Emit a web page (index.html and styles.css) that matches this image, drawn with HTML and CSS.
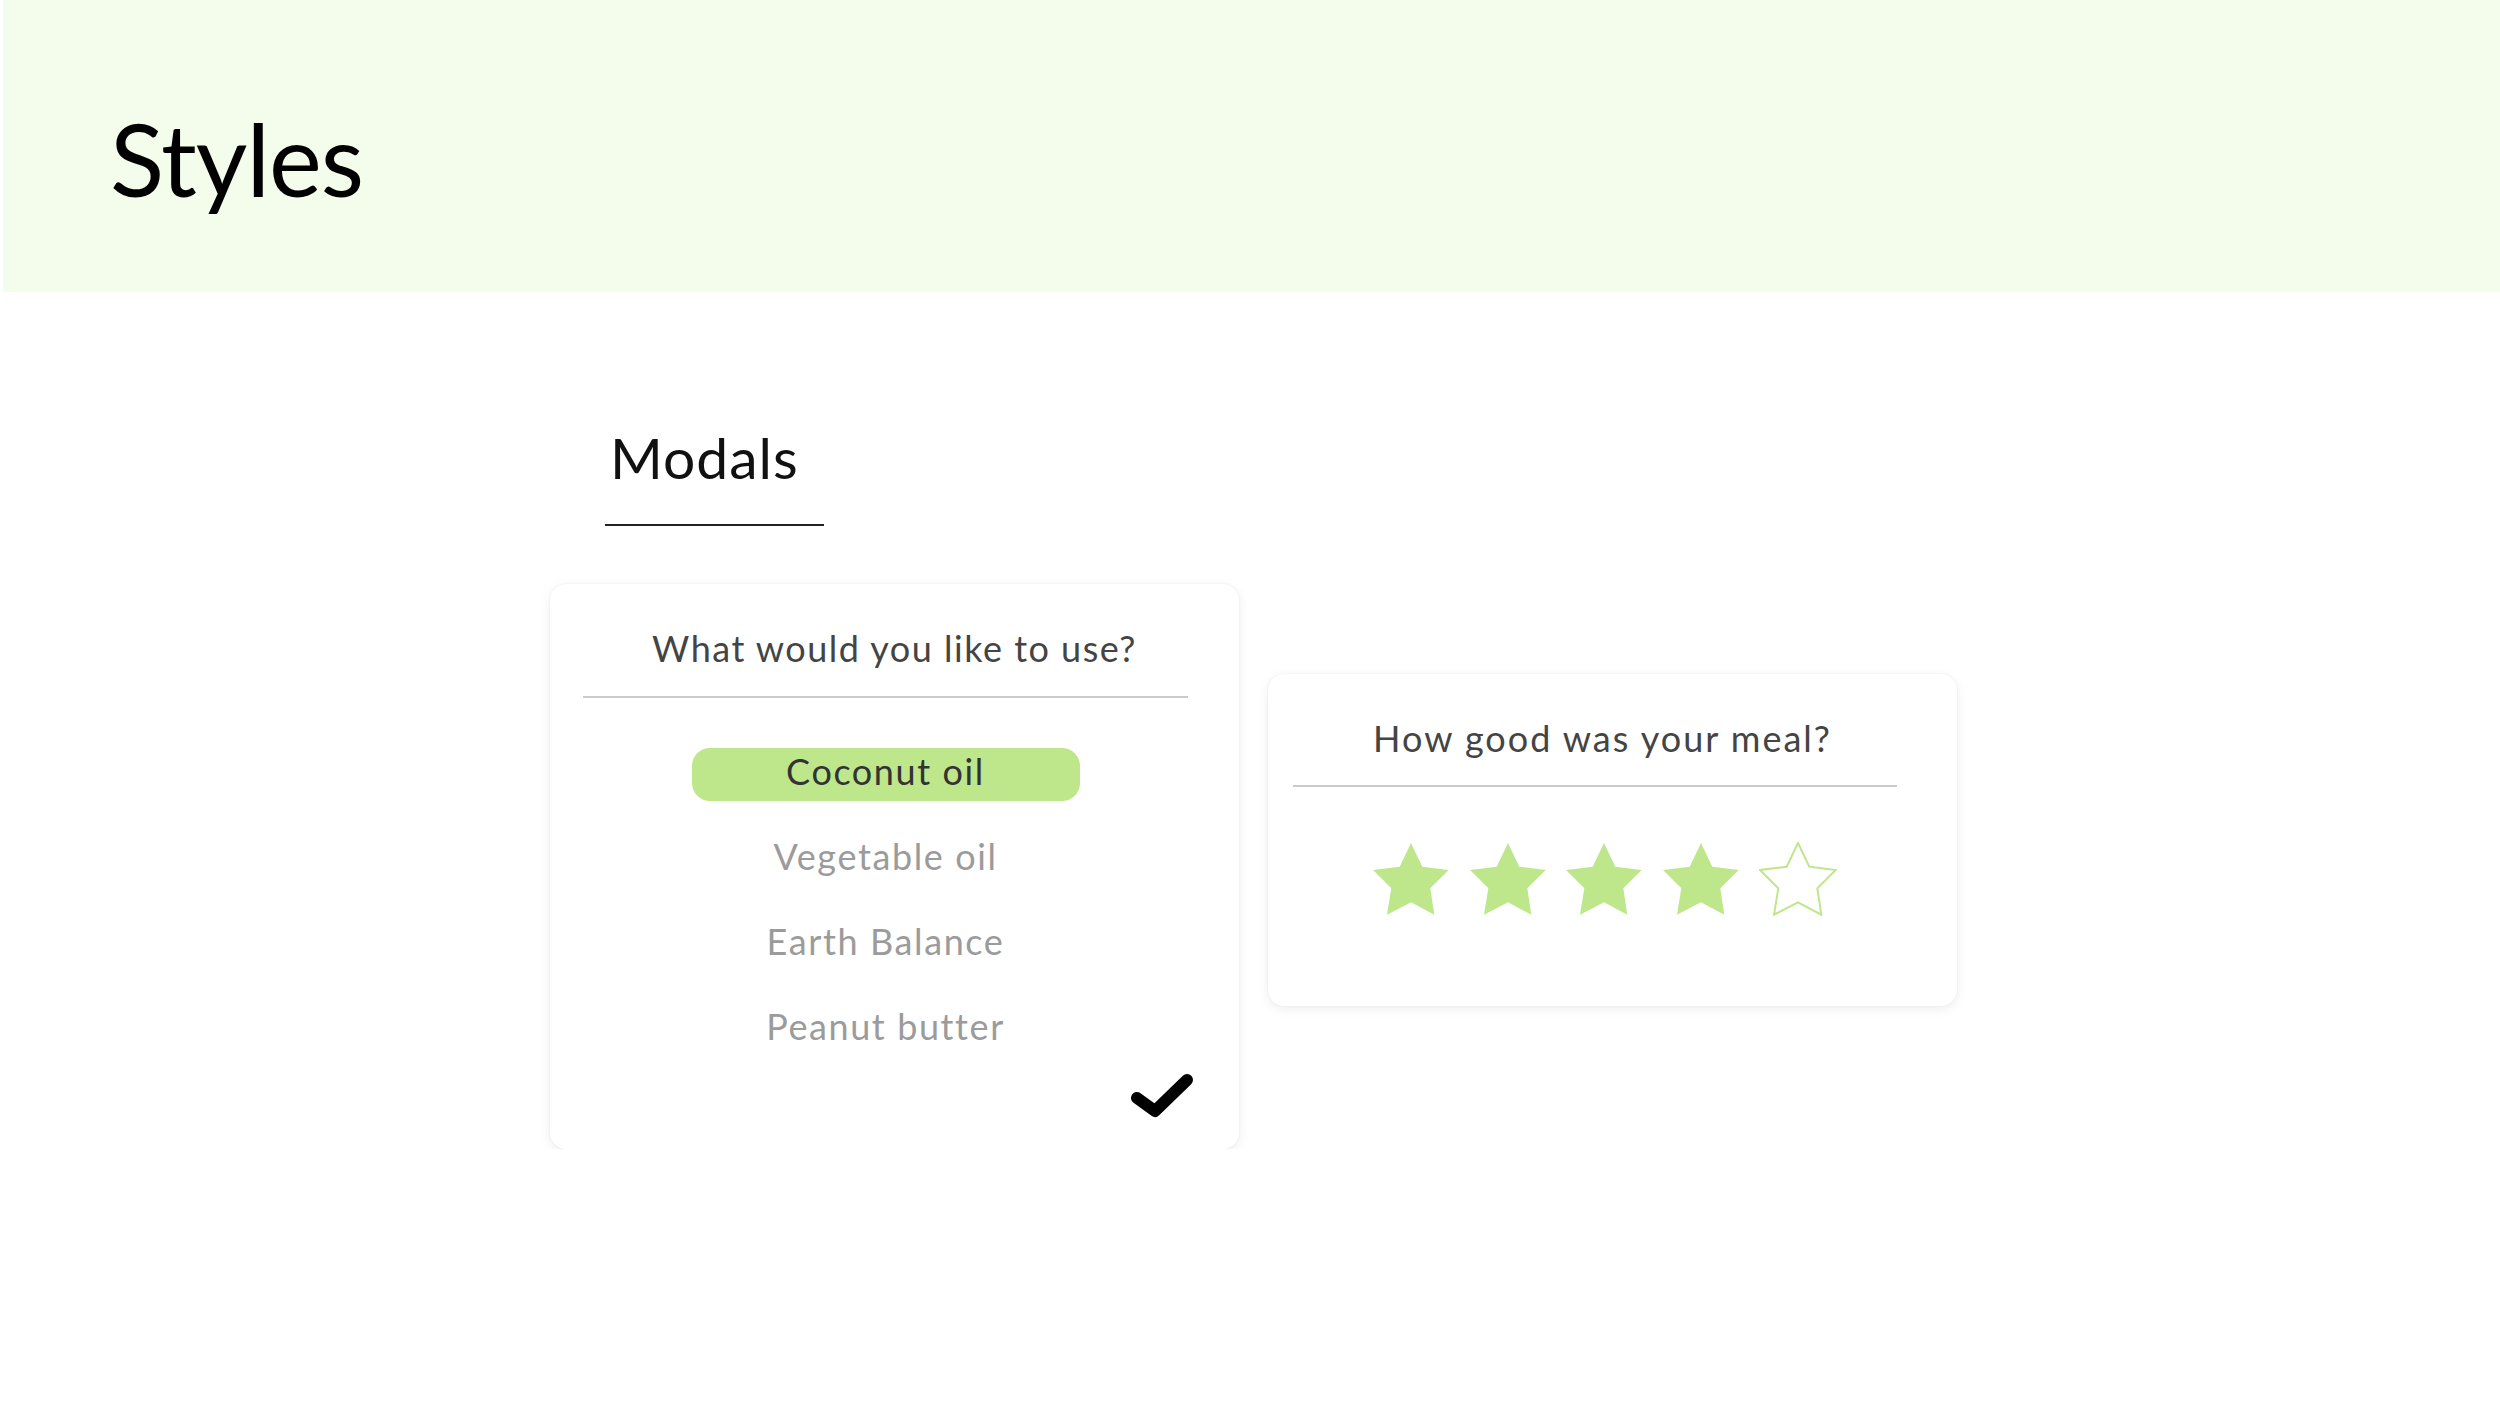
FILE: index.html
```html
<!DOCTYPE html>
<html lang="en">
<head>
<meta charset="utf-8">
<title>Styles</title>
<link rel="stylesheet" href="styles.css">
</head>
<body>
<header class="hero">
  <h1 class="hero-title">Styles</h1>
</header>
<main class="content">
  <section class="section">
    <h2 class="section-title">Modals</h2>
    <div class="modals">
      <div class="modal modal-choice">
        <div class="modal-title">What would you like to use?</div>
        <div class="modal-body">
          <div class="modal-rule"></div>
          <ul class="options">
            <li class="option selected">Coconut oil</li>
            <li class="option">Vegetable oil</li>
            <li class="option">Earth Balance</li>
            <li class="option">Peanut butter</li>
          </ul>
        </div>
        <div class="modal-actions">
          <svg class="check" width="64" height="48" viewBox="0 0 64 48"><path d="M7 27 L25 40 L57 9" fill="none" stroke="#000" stroke-width="12" stroke-linecap="round" stroke-linejoin="round"/></svg>
        </div>
      </div>
      <div class="modal modal-rating">
        <div class="modal-title rating-title">How good was your meal?</div>
        <div class="modal-body rating-body">
          <div class="modal-rule"></div>
          <div class="stars">
            <svg class="star" viewBox="0 0 76 72"><polygon class="star-fill" points="38,0 26.7,23.7 0,27 18.3,45.3 14,71.7 38,59.3 61.3,71.7 57.3,45.3 75.7,27 49.3,23.7"/></svg>
            <svg class="star" viewBox="0 0 76 72"><polygon class="star-fill" points="38,0 26.7,23.7 0,27 18.3,45.3 14,71.7 38,59.3 61.3,71.7 57.3,45.3 75.7,27 49.3,23.7"/></svg>
            <svg class="star" viewBox="0 0 76 72"><polygon class="star-fill" points="38,0 26.7,23.7 0,27 18.3,45.3 14,71.7 38,59.3 61.3,71.7 57.3,45.3 75.7,27 49.3,23.7"/></svg>
            <svg class="star" viewBox="0 0 76 72"><polygon class="star-fill" points="38,0 26.7,23.7 0,27 18.3,45.3 14,71.7 38,59.3 61.3,71.7 57.3,45.3 75.7,27 49.3,23.7"/></svg>
            <svg class="star" viewBox="-1 -1 78 74"><polygon class="star-empty" points="38,0 26.7,23.7 0,27 18.3,45.3 14,71.7 38,59.3 61.3,71.7 57.3,45.3 75.7,27 49.3,23.7"/></svg>
          </div>
        </div>
      </div>
    </div>
  </section>
</main>
</body>
</html>
```
FILE: styles.css
```css
html, body {
  margin: 0;
  padding: 0;
  background: #ffffff;
  font-family: "Lato", "Open Sans", sans-serif;
}

.hero {
  margin-left: 3px;
  height: 292px;
  background: #f4fdeb;
  box-sizing: border-box;
  padding: 108px 0 0 107px;
}

.hero-title {
  margin: 0;
  font-size: 100px;
  line-height: 100px;
  font-weight: 400;
  letter-spacing: -1px;
  color: #000;
}

.content {
  padding: 137px 0 0 550px;
}

.section-title {
  margin: 0 0 58px 55px;
  width: 219px;
  box-sizing: border-box;
  padding: 0 0 38px 5px;
  border-bottom: 2px solid #222;
  font-size: 57px;
  line-height: 57px;
  font-weight: 400;
  letter-spacing: 1px;
  color: #111;
}

.modals {
  display: flex;
  align-items: flex-start;
  gap: 29px;
}

.modal {
  width: 689px;
  background: #fff;
  border-radius: 16px;
  box-shadow: 0 3px 12px rgba(0, 0, 0, 0.07), 0 0 2px rgba(0, 0, 0, 0.08);
  box-sizing: border-box;
  padding-top: 42px;
}

.modal-title {
  font-size: 36px;
  line-height: 44px;
  letter-spacing: 1.5px;
  color: #444;
  text-align: center;
}

.rating-title {
  letter-spacing: 2px;
  padding-right: 20px;
}

.modal-body {
  margin-left: 33px;
  width: 605px;
}

.modal-rule {
  height: 2px;
  background: #cbcbcb;
  margin-top: 26px;
}

.options {
  list-style: none;
  margin: 50px 0 0;
  padding: 0;
  display: flex;
  flex-direction: column;
  align-items: center;
  gap: 32px;
}

.option {
  box-sizing: border-box;
  width: 388px;
  height: 53px;
  padding-bottom: 6px;
  font-size: 36px;
  line-height: 47px;
  letter-spacing: 1.6px;
  text-align: center;
  color: #9b9b9b;
  border-radius: 18px;
}

.option.selected {
  background: #bee68b;
  color: #333;
}

.modal-actions {
  display: flex;
  justify-content: flex-end;
  padding: 15px 45px 30px 0;
}

.check {
  display: block;
}

.modal-rating {
  margin-top: 90px;
  padding-bottom: 90px;
}

.rating-body {
  margin-left: 25px;
  width: 604px;
}

.rating-body .modal-rule {
  margin-top: 25px;
}

.stars {
  display: flex;
  justify-content: center;
  gap: 20.5px;
  margin-top: 56px;
  padding-left: 20px;
}

.star {
  width: 76px;
  height: 72px;
  display: block;
}

.star:last-child {
  width: 78px;
  height: 74px;
  margin-top: -1px;
}

.star-fill {
  fill: #bee68b;
}

.star-empty {
  fill: #fff;
  stroke: #bee68b;
  stroke-width: 2;
}
```
